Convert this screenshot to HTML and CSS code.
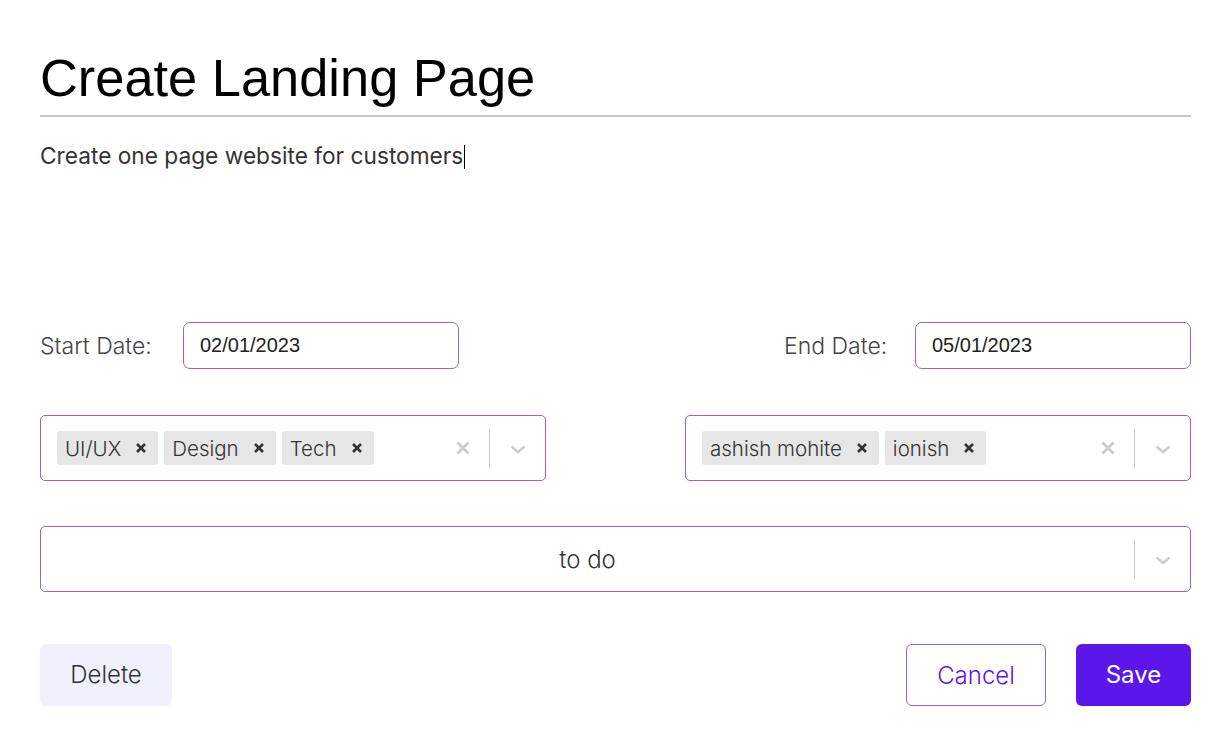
FILE: index.html
```html
<!DOCTYPE html>
<html>
<head>
<meta charset="utf-8">
<link rel="stylesheet" href="styles.css">
</head>
<body>
<div class="modal">
  <div class="title">Create Landing Page</div>
  <div class="desc">Create one page website for customers<span class="caret"></span></div>

  <div class="dates">
    <div class="date-field">
      <span class="label">Start Date:</span>
      <div class="date-input">02/01/2023</div>
    </div>
    <div class="date-field">
      <span class="label">End Date:</span>
      <div class="date-input">05/01/2023</div>
    </div>
  </div>

  <div class="selects">
    <div class="select multi">
      <div class="values">
        <span class="chip">UI/UX<span class="rm"><svg viewBox="0 0 12 12" width="12" height="12"><path d="M2 2L10 10M10 2L2 10" stroke="#333" stroke-width="2.6"/></svg></span></span>
        <span class="chip">Design<span class="rm"><svg viewBox="0 0 12 12" width="12" height="12"><path d="M2 2L10 10M10 2L2 10" stroke="#333" stroke-width="2.6"/></svg></span></span>
        <span class="chip">Tech<span class="rm"><svg viewBox="0 0 12 12" width="12" height="12"><path d="M2 2L10 10M10 2L2 10" stroke="#333" stroke-width="2.6"/></svg></span></span>
      </div>
      <div class="indicators">
        <span class="clear"><svg viewBox="0 0 14 14" width="14" height="14"><path d="M1.5 1.5L12.5 12.5M12.5 1.5L1.5 12.5" stroke="#ccc" stroke-width="2.8"/></svg></span>
        <span class="sep"></span>
        <span class="chev"><svg viewBox="0 0 16 9" width="16" height="9"><path d="M1.5 1.5L8 7L14.5 1.5" fill="none" stroke="#ccc" stroke-width="2.6"/></svg></span>
      </div>
    </div>
    <div class="select multi">
      <div class="values">
        <span class="chip">ashish mohite<span class="rm"><svg viewBox="0 0 12 12" width="12" height="12"><path d="M2 2L10 10M10 2L2 10" stroke="#333" stroke-width="2.6"/></svg></span></span>
        <span class="chip">ionish<span class="rm"><svg viewBox="0 0 12 12" width="12" height="12"><path d="M2 2L10 10M10 2L2 10" stroke="#333" stroke-width="2.6"/></svg></span></span>
      </div>
      <div class="indicators">
        <span class="clear"><svg viewBox="0 0 14 14" width="14" height="14"><path d="M1.5 1.5L12.5 12.5M12.5 1.5L1.5 12.5" stroke="#ccc" stroke-width="2.8"/></svg></span>
        <span class="sep"></span>
        <span class="chev"><svg viewBox="0 0 16 9" width="16" height="9"><path d="M1.5 1.5L8 7L14.5 1.5" fill="none" stroke="#ccc" stroke-width="2.6"/></svg></span>
      </div>
    </div>
  </div>

  <div class="select status">
    <div class="status-value">to do</div>
    <div class="indicators">
      <span class="sep"></span>
      <span class="chev"><svg viewBox="0 0 16 9" width="16" height="9"><path d="M1.5 1.5L8 7L14.5 1.5" fill="none" stroke="#ccc" stroke-width="2.6"/></svg></span>
    </div>
  </div>

  <div class="actions">
    <button class="btn delete">Delete</button>
    <div class="right-actions">
      <button class="btn cancel">Cancel</button>
      <button class="btn save">Save</button>
    </div>
  </div>
</div>
</body>
</html>
```

FILE: styles.css
```css
* { box-sizing: border-box; }
html, body { margin: 0; padding: 0; background: #fff; }
body {
  font-family: Inter, "Noto Sans", sans-serif;
  color: #333;
}
.modal {
  width: 1231px;
  padding: 48px 40px 0 40px;
}
.title {
  font-family: "Liberation Sans", Arial, sans-serif;
  font-size: 52.4px;
  line-height: 60px;
  color: #000;
  padding-bottom: 7px;
  border-bottom: 2px solid #c8c8c8;
}
.desc {
  font-size: 22.7px;
  line-height: 28px;
  color: #333;
  padding-top: 25px;
  height: 205px;
}
.caret {
  display: inline-block;
  width: 1px;
  height: 24px;
  background: #000;
  vertical-align: -5px;
  margin-left: 1px;
}
.dates {
  display: flex;
  justify-content: space-between;
  height: 47px;
}
.date-field {
  display: flex;
  align-items: center;
}
.label {
  font-size: 23px;
  font-weight: 300;
  color: #444;
  width: 143px;
}
.date-field + .date-field .label { width: 131px; }
.date-input {
  width: 276px;
  height: 47px;
  border: 1px solid #9062f0;
  border-radius: 7px;
  font-family: "Liberation Sans", Arial, sans-serif;
  font-size: 20px;
  color: #222;
  padding: 0 0 1px 16px;
  display: flex;
  align-items: center;
}
.selects {
  display: flex;
  justify-content: space-between;
  margin-top: 46px;
}
.select {
  border: 1px solid #9062f0;
  border-radius: 5px;
  height: 66px;
  display: flex;
  align-items: center;
}
.multi { width: 506px; }
.values {
  flex: 1;
  display: flex;
  gap: 6px;
  padding-left: 16px;
}
.chip {
  background: #e6e6e6;
  border-radius: 3px;
  height: 34px;
  display: flex;
  align-items: center;
  padding-left: 8px;
  font-size: 20.5px;
  font-weight: 300;
  color: #333;
}
.rm {
  display: flex;
  align-items: center;
  justify-content: center;
  margin-left: 14px;
  padding-right: 11px;
}
.indicators {
  display: flex;
  align-items: center;
  height: 100%;
}
.clear {
  display: flex;
  width: 44px;
  justify-content: center;
  padding-right: 8px;
}
.sep {
  width: 1px;
  height: 39px;
  background: #ccc;
}
.chev {
  width: 55px;
  display: flex;
  justify-content: center;
  padding-top: 2px;
}
.status {
  margin-top: 45px;
  width: 100%;
}
.status-value {
  flex: 1;
  text-align: center;
  font-size: 24px;
  font-weight: 300;
  color: #333;
}
.actions {
  display: flex;
  justify-content: space-between;
  margin-top: 52px;
}
.right-actions {
  display: flex;
  gap: 30px;
}
.btn {
  font-family: Inter, "Noto Sans", sans-serif;
  font-size: 24px;
  height: 62px;
  border-radius: 6px;
  border: 1px solid transparent;
  cursor: pointer;
}
.delete {
  width: 132px;
  background: #eff0fc;
  color: #333;
  font-weight: 300;
  padding-bottom: 2px;
}
.cancel {
  width: 140px;
  background: #fff;
  border-color: #9062f0;
  color: #5b17ea;
  font-weight: 300;
  padding-top: 2px;
}
.save {
  width: 115px;
  background: #5b17ea;
  color: #fff;
  font-weight: 400;
  padding-bottom: 2px;
}
```
